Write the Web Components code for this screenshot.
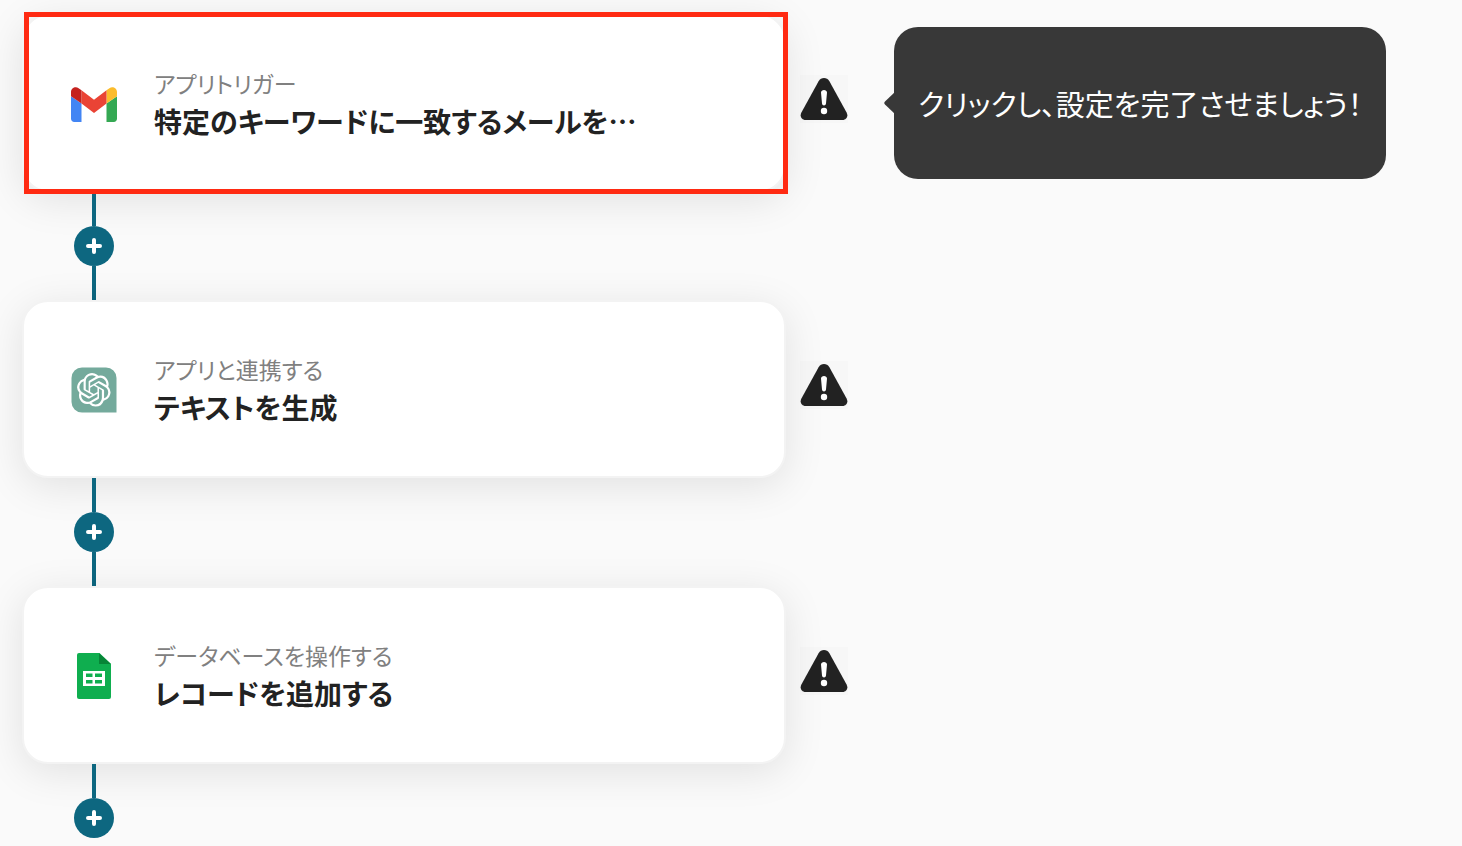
<!DOCTYPE html>
<html lang="ja">
<head>
<meta charset="utf-8">
<meta name="viewport" content="width=device-width, initial-scale=1">
<title>フローボット</title>
<style>
    body {
        margin: 0;
        background: #fafafa;
        color: #222;
        font-family: "Noto Sans CJK JP", "Noto Sans", sans-serif;
        font-feature-settings: "palt";
    }
</style>
</head>
<body>
<flow-editor></flow-editor>

<script>
const icons = {
    gmail: `
        <svg viewBox="0 0 48 48" width="48" height="48" aria-hidden="true">
            <path fill="#4285f4" d="M4.200 42H11.500V23.600L1 16.200V38.800C1 40.600 2.400 42 4.200 42Z"/>
            <path fill="#34a853" d="M36.500 42H43.800C45.600 42 47 40.600 47 38.800V16.200L36.500 23.600Z"/>
            <path fill="#fbbc2c" d="M36.500 10.300V23.600L47 16.200V12C47 8.100 42.500 5.900 39.400 8.200Z"/>
            <path fill="#ea4335" d="M11.500 23.600V10.300L24 19.700L36.500 10.300V23.600L24 33Z"/>
            <path fill="#c5221f" d="M1 12V16.200L11.500 23.600V10.300L8.600 8.200C5.500 5.900 1 8.100 1 12Z"/>
        </svg>`,
    openai: `
        <svg viewBox="0 0 48 48" width="48" height="48" aria-hidden="true">
            <path fill="#74aa9c" d="M12 1.500H36A10.500 10.500 0 0 1 46.500 12V46.500H12A10.500 10.500 0 0 1 1.500 36V12A10.500 10.500 0 0 1 12 1.500Z"/>
            <g transform="translate(7 7) scale(1.400)">
                <path fill="#fff" d="M22.282 9.821a5.985 5.985 0 0 0-.516-4.910 6.046 6.046 0 0 0-6.510-2.900A6.065 6.065 0 0 0 4.981 4.182a5.985 5.985 0 0 0-3.998 2.900 6.046 6.046 0 0 0 .743 7.097 5.980 5.980 0 0 0 .511 4.911 6.051 6.051 0 0 0 6.515 2.900A5.985 5.985 0 0 0 13.260 24a6.056 6.056 0 0 0 5.772-4.206 5.990 5.990 0 0 0 3.998-2.900 6.056 6.056 0 0 0-.748-7.073zM13.260 22.430a4.476 4.476 0 0 1-2.876-1.041l.142-.080 4.778-2.758a.795.795 0 0 0 .393-.681v-6.737l2.020 1.169a.071.071 0 0 1 .038.052v5.583a4.504 4.504 0 0 1-4.495 4.493zM3.600 18.304a4.471 4.471 0 0 1-.535-3.014l.142.085 4.783 2.759a.771.771 0 0 0 .780 0l5.843-3.369v2.332a.080.080 0 0 1-.033.062L9.740 19.950a4.499 4.499 0 0 1-6.140-1.646zM2.341 7.896a4.485 4.485 0 0 1 2.365-1.973V11.600a.766.766 0 0 0 .388.676l5.815 3.355-2.020 1.168a.076.076 0 0 1-.071 0l-4.830-2.786A4.504 4.504 0 0 1 2.341 7.872zm16.596 3.856-5.833-3.387L15.119 7.200a.076.076 0 0 1 .071 0l4.830 2.791a4.494 4.494 0 0 1-.676 8.105v-5.678a.790.790 0 0 0-.407-.667zm2.011-3.023-.142-.085-4.774-2.782a.776.776 0 0 0-.785 0L9.409 9.230V6.897a.066.066 0 0 1 .028-.061l4.830-2.787a4.499 4.499 0 0 1 6.681 4.660zM8.307 12.863l-2.020-1.164a.080.080 0 0 1-.038-.057V6.075a4.499 4.499 0 0 1 7.376-3.454l-.142.081L8.704 5.460a.795.795 0 0 0-.393.681zm1.097-2.365L12.006 9l2.607 1.500v2.999l-2.597 1.500-2.607-1.500z"/>
            </g>
        </svg>`,
    sheets: `
        <svg viewBox="0 0 48 48" width="48" height="48" aria-hidden="true">
            <path fill="#0fae4f" d="M9 1H29.500L41 12V45A2 2 0 0 1 39 47H9A2 2 0 0 1 7 45V3A2 2 0 0 1 9 1Z"/>
            <path fill="#078537" d="M29 1.200V12H41Z"/>
            <path fill="#fff" fill-rule="evenodd" d="M13 19H35V34H13ZM16 21.500V25H22.500V21.500ZM25 21.500V25H32V21.500ZM16 28V31.500H22.500V28ZM25 28V31.500H32V28Z"/>
        </svg>`
};

class FlowCard extends HTMLElement {
    constructor() {
        super();
        this.attachShadow({ mode: 'open' });
        this.shadowRoot.innerHTML = `
            <style>
                :host {
                    display: block;
                    position: relative;
                    flex: 0 1 764px;
                    min-width: 0;
                }
                button {
                    display: flex;
                    align-items: center;
                    gap: 36px;
                    box-sizing: border-box;
                    width: 100%;
                    min-height: 178px;
                    padding: 0 46px;
                    border: 2px solid #f3f3f3;
                    border-radius: 26px;
                    background: #fff;
                    box-shadow: 0 8px 40px rgba(0, 0, 0, .1);
                    color: inherit;
                    font: inherit;
                    font-feature-settings: inherit;
                    text-align: left;
                    cursor: pointer;
                }
                .icon {
                    flex: none;
                    height: 48px;
                    padding-top: 2px;
                }
                .text {
                    display: flex;
                    flex-direction: column;
                    min-width: 0;
                }
                .kind {
                    color: #808080;
                    font-size: 23px;
                    line-height: 36px;
                }
                .title {
                    font-size: 28px;
                    font-weight: 700;
                    line-height: 40px;
                }
                /* frame around the step that is being pointed out */
                :host([marked])::after {
                    content: "";
                    position: absolute;
                    inset: -2px -2px -2px 2px;
                    border: 5px solid #ff2a12;
                    pointer-events: none;
                    z-index: 1;
                }
            </style>
            <button type="button">
                <span class="icon">${icons[this.getAttribute('icon')]}</span>
                <span class="text">
                    <span class="kind"><slot name="kind"></slot></span>
                    <span class="title"><slot></slot></span>
                </span>
            </button>
        `;
    }
}

class FlowWarning extends HTMLElement {
    constructor() {
        super();
        this.attachShadow({ mode: 'open' });
        this.shadowRoot.innerHTML = `
            <style>
                :host {
                    display: block;
                    flex: none;
                    padding-bottom: 8px;
                }
                svg {
                    display: block;
                    background: rgba(0, 0, 0, .01);
                }
            </style>
            <svg viewBox="0 0 48 48" width="48" height="48" role="img" aria-label="未設定">
                <path fill="#222" d="M18.600 6.200C21 2 27 2 29.400 6.200L46.600 37.500C48.500 41 46.500 45 42.500 45H5.500C1.500 45-.500 41 1.400 37.500Z"/>
                <path fill="#fff" d="M21 17.500C21 14 27 14 27 17.500L26 28.500C25.800 31 22.200 31 22 28.500Z"/>
                <circle cx="24" cy="36" r="3.200" fill="#fff"/>
            </svg>
        `;
    }
}

class FlowTooltip extends HTMLElement {
    constructor() {
        super();
        this.attachShadow({ mode: 'open' });
        this.shadowRoot.innerHTML = `
            <style>
                :host {
                    display: flex;
                    align-items: center;
                    position: relative;
                    box-sizing: border-box;
                    min-height: 152px;
                    margin-left: 46px;
                    padding: 0 24px;
                    border-radius: 24px;
                    background: #383838;
                    color: #fff;
                    font-size: 29px;
                    line-height: 42px;
                }
                .arrow {
                    position: absolute;
                    top: 50%;
                    left: -10px;
                    margin-top: -12px;
                    fill: #383838;
                }
            </style>
            <svg class="arrow" viewBox="0 0 12 24" width="12" height="24" aria-hidden="true">
                <path d="M12 0L1 10.500Q-.500 12 1 13.500L12 24Z"/>
            </svg>
            <slot></slot>
        `;
    }
}

class FlowConnector extends HTMLElement {
    constructor() {
        super();
        this.attachShadow({ mode: 'open' });
        this.shadowRoot.innerHTML = `
            <style>
                :host {
                    display: flex;
                    flex-direction: column;
                    align-items: center;
                    width: 40px;
                    margin-left: 52px;
                    position: relative;
                }
                .line {
                    width: 4px;
                    height: 34px;
                    background: #0d6780;
                }
                :host([last]) .line.after {
                    display: none;
                }
                button {
                    display: flex;
                    align-items: center;
                    justify-content: center;
                    width: 40px;
                    height: 40px;
                    padding: 0;
                    border: 0;
                    border-radius: 50%;
                    background: #0d6780;
                    cursor: pointer;
                }
            </style>
            <span class="line"></span>
            <button type="button" aria-label="追加">
                <svg viewBox="0 0 16 16" width="16" height="16" aria-hidden="true">
                    <path d="M8 2V14M2 8H14" stroke="#fff" stroke-width="4" stroke-linecap="round"/>
                </svg>
            </button>
            <span class="line after"></span>
        `;
    }
}

class FlowEditor extends HTMLElement {
    constructor() {
        super();
        this.attachShadow({ mode: 'open' });
        this.shadowRoot.innerHTML = `
            <style>
                :host {
                    display: block;
                    padding: 14px 22px 8px;
                }
                .row {
                    display: flex;
                    align-items: center;
                }
                flow-warning {
                    margin-left: 14px;
                }
            </style>
            <main>
                <div class="row">
                    <flow-card icon="gmail" marked><span slot="kind">アプリトリガー</span>特定のキーワードに一致するメールを…</flow-card>
                    <flow-warning></flow-warning>
                    <flow-tooltip role="tooltip">クリックし、設定を完了させましょう！</flow-tooltip>
                </div>
                <flow-connector></flow-connector>
                <div class="row">
                    <flow-card icon="openai"><span slot="kind">アプリと連携する</span>テキストを生成</flow-card>
                    <flow-warning></flow-warning>
                </div>
                <flow-connector></flow-connector>
                <div class="row">
                    <flow-card icon="sheets"><span slot="kind">データベースを操作する</span>レコードを追加する</flow-card>
                    <flow-warning></flow-warning>
                </div>
                <flow-connector last></flow-connector>
            </main>
        `;
    }
}

customElements.define('flow-card', FlowCard);
customElements.define('flow-warning', FlowWarning);
customElements.define('flow-tooltip', FlowTooltip);
customElements.define('flow-connector', FlowConnector);
customElements.define('flow-editor', FlowEditor);
</script>
</body>
</html>
